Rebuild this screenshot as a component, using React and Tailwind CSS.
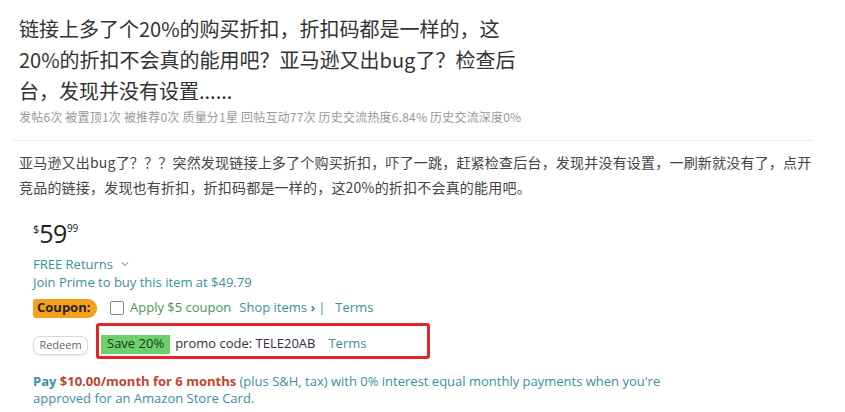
import React from 'react';

const cjk = { fontFamily: '"Noto Sans CJK SC", "Noto Sans", sans-serif' };
const amz = { fontFamily: '"Open Sans", "Noto Sans", sans-serif' };

function Price() {
  return (
    <div className="flex items-start text-[#222]">
      <span className="mt-[2px] text-[11px] leading-none">$</span>
      <span className="text-[25px] leading-none tracking-[-0.5px]">59</span>
      <span className="mt-[2px] text-[10px] leading-none">99</span>
    </div>
  );
}

function CouponRow() {
  return (
    <div className="flex h-[20px] items-center">
      <span className="flex h-[19px] w-[64px] items-center rounded-l-[3px] rounded-r-[9px] bg-[#f5a01a] pl-[4px] text-[13px] font-bold text-[#2a2320]">
        Coupon:
      </span>
      <span className="ml-[13px] h-[14px] w-[14px] rounded-[2px] border border-[#888] bg-white" />
      <span className="ml-[6px] text-[13px] text-[#3f9a52]">Apply $5 coupon</span>
      <span className="ml-[8px] text-[13px] text-[#3a8fa0]">
        Shop items <span className="font-bold">›</span>
      </span>
      <span className="ml-[3px] text-[13px] text-[#3a8fa0]">|</span>
      <span className="ml-[10px] text-[13px] text-[#3a8fa0]">Terms</span>
    </div>
  );
}

function PromoRow() {
  return (
    <div className="flex items-start">
      <span className="mt-[13px] flex h-[19px] w-[55px] items-center justify-center rounded-[7px] border border-[#d5d9d9] text-[11px] text-[#666] shadow-[0_1px_2px_rgba(0,0,0,0.08)]">
        Redeem
      </span>
      <div className="ml-[8px] flex h-[36px] w-[334px] items-center rounded-[3px] border-[3px] border-[#e5232a] pl-[2px] pt-[6px]">
        <span className="flex h-[19px] items-center bg-[#6ed06a] px-[6px] text-[13px] text-[#1c3a1c]">
          Save 20%
        </span>
        <span className="ml-[5px] text-[13px] text-[#333]">
          promo code: <span className="text-[#3a2a4a]">TELE20AB</span>
        </span>
        <span className="ml-[13px] text-[13px] text-[#3a8fa0]">Terms</span>
      </div>
    </div>
  );
}

export default function App() {
  return (
    <div className="h-[412px] w-[845px] overflow-hidden bg-white" style={cjk}>
      <div className="pl-[19px] pt-[13px]">
        <h1 className="w-[502px] text-[20px] font-normal leading-[31px] text-[#333]">
          链接上多了个20%的购买折扣，折扣码都是一样的，这20%的折扣不会真的能用吧？亚马逊又出bug了？检查后台，发现并没有设置......
        </h1>
        <p className="mt-[1px] text-[12px] leading-[20px] tracking-[0.2px] text-[#999]">
          发帖6次 被置顶1次 被推荐0次 质量分1星 回帖互动77次 历史交流热度6.84% 历史交流深度0%
        </p>
      </div>
      <div className="mx-[12px] mt-[13px] w-[801px] border-t border-[#eee]" />
      <p className="ml-[19px] mt-[9px] w-[800px] text-[14px] leading-[25px] tracking-[0.2px] text-[#444]">
        亚马逊又出bug了？？？突然发现链接上多了个购买折扣，吓了一跳，赶紧检查后台，发现并没有设置，一刷新就没有了，点开竞品的链接，发现也有折扣，折扣码都是一样的，这20%的折扣不会真的能用吧。
      </p>
      <div className="ml-[33px] mt-[21px] flex flex-col" style={amz}>
        <Price />
        <div className="mt-[9px] flex items-center text-[13px] leading-[18px] text-[#3a8fa0]">
          FREE Returns
          <svg className="ml-[8px]" width="8" height="6" viewBox="0 0 8 6">
            <path d="M1 1.5 L4 4.5 L7 1.5" fill="none" stroke="#9aa" strokeWidth="1.2" />
          </svg>
        </div>
        <div className="text-[13px] leading-[18px] text-[#3a8fa0]">
          Join Prime to buy this item at $49.79
        </div>
        <div className="mt-[7px]">
          <CouponRow />
        </div>
        <div className="mt-[5px]">
          <PromoRow />
        </div>
        <div className="mt-[14px] text-[13px] leading-[17px] text-[#3a8fa0]">
          <span className="font-bold">Pay </span>
          <span className="font-bold text-[#c0452a]">$10.00/month for 6 months</span> (plus S&amp;H, tax)
          with 0% interest equal monthly payments when you're
          <br />
          approved for an Amazon Store Card.
        </div>
      </div>
    </div>
  );
}
